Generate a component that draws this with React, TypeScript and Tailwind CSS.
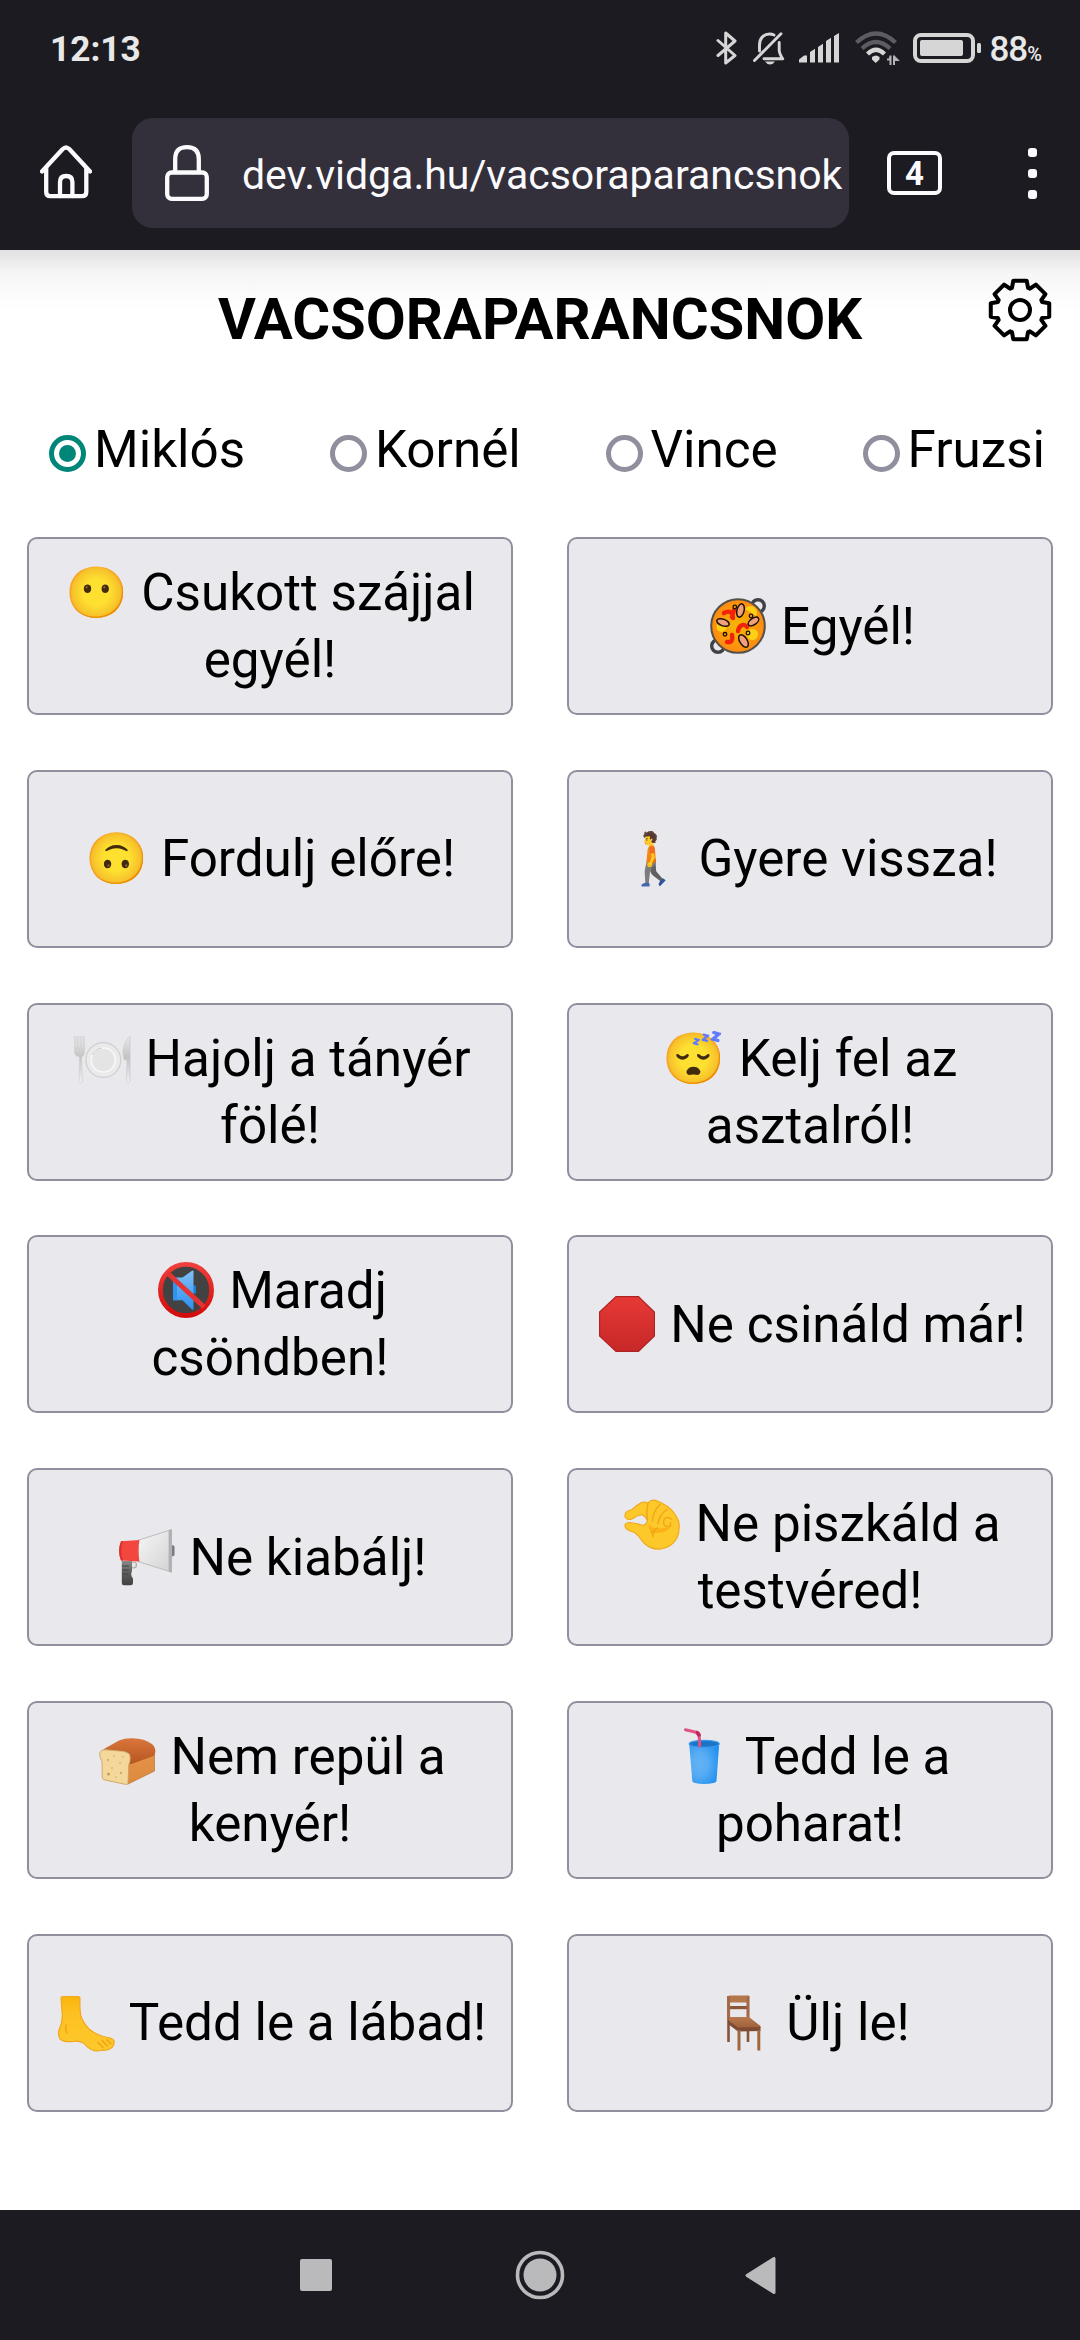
import React from 'react';

const people = ['Miklós', 'Kornél', 'Vince', 'Fruzsi'];

function Paella() {
  return (
    <>
      <defs>
        <radialGradient id="rice">
          <stop offset="0" stopColor="#f6b800" />
          <stop offset="0.55" stopColor="#fb9d0a" />
          <stop offset="1" stopColor="#fd8a12" />
        </radialGradient>
      </defs>
      <g fill="none" stroke="#3f4345" strokeWidth="3.4">
        <circle cx="48" cy="8" r="6.3" />
        <circle cx="8" cy="48" r="6.3" />
      </g>
      <circle cx="28" cy="28" r="26.8" fill="url(#rice)" stroke="#555048" strokeWidth="2" />
      <g fill="#fdd016">
        <path d="M35 11a6.5 6.5 0 0 1 11 7z" />
        <circle cx="11.5" cy="29" r="5" />
        <circle cx="42.5" cy="36.5" r="5.5" />
      </g>
      <g fill="none" stroke="#f3230b" strokeWidth="4.4" strokeLinecap="round">
        <path d="M14 15c5-3 9-1 9 5M24 12l-2 7" />
        <path d="M28 33c1-6 6-8 9-4" />
        <path d="M17 44c5 1 6-3 5-7" />
      </g>
      <g fill="#f2a07c" stroke="#1a1208" strokeWidth="1.5">
        <ellipse cx="30.5" cy="12.5" rx="3.6" ry="6.8" transform="rotate(14 30.5 12.5)" />
        <ellipse cx="13" cy="24.5" rx="6.5" ry="3.3" transform="rotate(20 13 24.5)" />
        <ellipse cx="43.5" cy="23.5" rx="6" ry="3.3" transform="rotate(-35 43.5 23.5)" />
        <ellipse cx="33.5" cy="43" rx="3.7" ry="7" transform="rotate(-32 33.5 43)" />
      </g>
      <g fill="none" stroke="#1a1208" strokeWidth="1.3">
        <circle cx="24.8" cy="9" r="1.8" />
        <circle cx="41" cy="18" r="1.8" />
        <circle cx="38" cy="35" r="1.8" />
        <circle cx="15" cy="36.3" r="1.8" />
      </g>
    </>
  );
}

function PlateSetting() {
  return (
    <>
      <defs>
        <linearGradient id="silver" x1="0" y1="0" x2="0" y2="1">
          <stop offset="0" stopColor="#e9e9e9" />
          <stop offset="0.45" stopColor="#c4c4c4" />
          <stop offset="1" stopColor="#f1f1f1" />
        </linearGradient>
      </defs>
      <circle cx="29.3" cy="30" r="17.4" fill="#eaeaea" stroke="#cfcfcf" strokeWidth="1.2" />
      <circle cx="29.3" cy="30" r="12" fill="#e4e4e4" stroke="#f8f8f8" strokeWidth="1.5" />
      <path d="M18.5 25a12 12 0 0 1 9-7" fill="none" stroke="#c8c8c8" strokeWidth="1" />
      <path d="M.6 6.5h1.5v11h1.4v-11h1.5v11h1.3v-11h1.5v11h1.2v-11h1.5v15c0 3-1 4.5-3 5.5l1 24.5q-1.7 2.300-3.500 0l.6-24.500C1.600 26 .6 24.500.6 21.500z" fill="url(#silver)" stroke="#c9c9c9" strokeWidth=".5" />
      <path d="M56 6.500v45q-1.800 2.300-3.600 0l.6-21.500h-2.600c-3.200-8 0-20 5.600-23.500z" fill="url(#silver)" stroke="#c4c4c4" strokeWidth=".6" />
    </>
  );
}

function MutedSpeaker() {
  return (
    <>
      <defs>
        <linearGradient id="ban" x1="0" y1="0" x2="0" y2="1">
          <stop offset="0" stopColor="#f0403c" />
          <stop offset="1" stopColor="#d30b0b" />
        </linearGradient>
        <linearGradient id="cone" x1="0" y1="0" x2="0" y2="1">
          <stop offset="0" stopColor="#82c0f7" />
          <stop offset="1" stopColor="#2b90f0" />
        </linearGradient>
      </defs>
      <circle cx="28" cy="28" r="25.6" fill="#424242" stroke="url(#ban)" strokeWidth="4.8" />
      <path d="M35 23.5h3v8h-3z" fill="#1c7cd6" />
      <path d="M15 15.5h9.500L34 8.800q1.500-.6 1.500.8v37.200q0 1.500-1.500.8L24.500 38.300H15z" fill="url(#cone)" />
      <path d="M15 15.500h4v22.800h-4z" fill="#2f93f2" />
      <path d="M10 11.500L46 45" stroke="#e53232" strokeWidth="5" />
    </>
  );
}

function StopSign() {
  return (
    <>
      <defs>
        <linearGradient id="stop" x1="0" y1="0" x2="0" y2="1">
          <stop offset="0" stopColor="#e73936" />
          <stop offset="1" stopColor="#c62828" />
        </linearGradient>
      </defs>
      <path d="M17 .6h22.500L55.400 16v24L39.500 55.400H17L.6 40V16z" fill="url(#stop)" stroke="#b02323" strokeWidth="1.2" />
    </>
  );
}

function Megaphone() {
  return (
    <>
      <defs>
        <linearGradient id="horn" x1="0" y1="0" x2="1" y2="1">
          <stop offset="0" stopColor="#f7f7f7" />
          <stop offset="1" stopColor="#d2d2d2" />
        </linearGradient>
        <linearGradient id="grip" x1="0" y1="0" x2="0" y2="1">
          <stop offset="0" stopColor="#8a8a8a" />
          <stop offset="0.5" stopColor="#5a5a5a" />
          <stop offset="1" stopColor="#424242" />
        </linearGradient>
      </defs>
      <circle cx="15.5" cy="36" r="3" fill="#e4e4e4" stroke="#a9a9a9" strokeWidth="1.2" />
      <path d="M3.800 32H14v10q-2 4 1 7.500V54q0 2.300-2.300 2.300H6q-2.200 0-2.200-2.300z" fill="url(#grip)" />
      <path d="M4 37h7M4 41h7M4 45h6" stroke="#444" strokeWidth="1" />
      <path d="M53 16.300h2q1.500 0 1.500 2v7q0 2-1.500 2h-2z" fill="#7b7b7b" />
      <path d="M20 11.300L53.500.6v42.500L20 32.500z" fill="url(#horn)" stroke="#bcbcbc" strokeWidth="1" />
      <path d="M50.600 1.300L53.800.2v43.300L50.600 42.500z" fill="#aeb2b4" />
      <path d="M3 12.300L21.500 11q-2 10 0 21.500L3 31.500Q-.8 22 3 12.300z" fill="#f2463f" />
      <path d="M3 12.300L5 12.100Q1.500 22 5 31.600l-2-.1Q-.8 22 3 12.300z" fill="#d9322e" />
    </>
  );
}

function Pinch() {
  return (
    <>
      <path
        d="M1.500 18.500Q2 16 8 14.500Q13 10 16.500 8Q20 6 24 8Q27 4 31.500 5.300Q38 7.500 43.500 11.500Q51 17 54.500 26Q56.500 34 53 43Q47 53 37 54Q27 55 20 48Q16.500 44 14 40.500Q11 37 6 36Q1 34 .9 30.500Q1 27.500 6 27.500Q14 28.500 19.500 30.500Q22.500 29.500 23.500 26Q22 22 18.500 19.500Q13 20.500 8 24Q3.500 25.500 1.300 22.500Q.6 20.500 1.500 18.500z"
        fill="#fdc829" stroke="#f0a91d" strokeWidth="1.2" strokeLinejoin="round"
      />
      <path d="M24 28Q27 34 38 33.500L46 31.500Q44 38 34 37.500Q29 40 25 34z" fill="#fbab10" opacity=".75" />
      <g fill="none" stroke="#f3a61a" strokeWidth="1.5" strokeLinecap="round">
        <path d="M24 8Q22 17 23.500 24" />
        <path d="M36 9.500Q28.500 17 28.500 26" />
        <path d="M43 14.500Q35 20 34 29" />
        <path d="M47.500 24Q40 20 39.500 27.500Q40.500 33 46.500 31V27.500" />
        <path d="M33.500 33Q29.500 35 29 39.500M27 36.500Q29 38.500 29 41.500" />
      </g>
    </>
  );
}

function Bread() {
  return (
    <>
      <defs>
        <linearGradient id="crust" x1="0" y1="0" x2="0" y2="1">
          <stop offset="0" stopColor="#d9763c" />
          <stop offset="1" stopColor="#b5561f" />
        </linearGradient>
        <linearGradient id="side" x1="0" y1="0" x2="0" y2="1">
          <stop offset="0" stopColor="#e3924a" />
          <stop offset="1" stopColor="#dc8a3d" />
        </linearGradient>
      </defs>
      <path d="M29 36L55.500 26v17L29 56z" fill="url(#side)" stroke="#c07a38" strokeWidth=".8" />
      <path d="M4 21.500L20 12.500q6-2.500 13-2.300 13 .3 20 5.800 4.500 4 3 9.500L54.500 28 31 36.500V27q-2-3.500-9-3.800L4 21.500z" fill="url(#crust)" />
      <path d="M.7 25.500Q1 21.500 7 21.800l15.500 1.400q8.500.8 8.700 6.300.2 4-1.500 7.500L29 56q-1.500.7-3 .3L6 52q-2.700-.8-2.700-2.500L3 33.500Q.5 29.500.7 25.500z" fill="#f3d79b" stroke="#cfa262" strokeWidth=".9" />
      <g fill="#c9a15f">
        <circle cx="9" cy="32" r="1" />
        <circle cx="15" cy="28" r=".8" />
        <circle cx="21" cy="35" r=".8" />
        <circle cx="9.5" cy="46" r="1.6" />
        <circle cx="13" cy="40" r=".8" />
        <circle cx="22" cy="45" r="1.1" />
        <circle cx="17" cy="49" r=".7" />
        <circle cx="24" cy="29" r=".7" />
      </g>
    </>
  );
}

function Cup() {
  return (
    <g transform="translate(1 0)">
      <defs>
        <radialGradient id="cup" cx="0.35" cy="0.5" r="0.7">
          <stop offset="0" stopColor="#63b2f5" />
          <stop offset="0.4" stopColor="#58acf3" />
          <stop offset="1" stopColor="#1f8ff0" />
        </radialGradient>
      </defs>
      <path d="M14.200 15.500h30L41.500 53q-.2 1.200-2 1.800-10.500 2.600-20.500 0-1.500-.5-1.700-1.800z" fill="url(#cup)" />
      <ellipse cx="29.2" cy="15.8" rx="15" ry="3.5" fill="#1b74c4" stroke="#3c9bef" strokeWidth="1.2" />
      <path d="M10.500 1.800L21 4.300q3 .8 3.200 4L24.700 18" fill="none" stroke="#e0527f" strokeWidth="3" strokeLinecap="round" />
      <path d="M21 4.300q3 .8 3.200 4" fill="none" stroke="#c8245c" strokeWidth="3.6" />
    </g>
  );
}

function Foot() {
  return (
    <>
      <defs>
        <linearGradient id="leg" x1="0" y1="0" x2="0" y2="1">
          <stop offset="0" stopColor="#fbb40e" />
          <stop offset="0.3" stopColor="#fdc022" />
          <stop offset="1" stopColor="#fdc92b" />
        </linearGradient>
      </defs>
      <path
        d="M3 4Q3 2.500 5 2.500H20Q22 2.500 22 4.500Q21.500 14 22.800 21.500Q25 29 31 35Q38 40.500 45 42.500Q54 43.500 56 46.500Q57 50 54 53.500Q50 57 44 56.200Q38 58 33 55.500Q28.500 53 25.500 49Q20 46.500 15 47.500Q6 48.500 2 45Q-.5 41 1 36Q4.500 29 4.300 21z"
        fill="url(#leg)" stroke="#f0a820" strokeWidth="1.200" strokeLinejoin="round"
      />
      <g fill="none" stroke="#ee9f17" strokeWidth="1.300" strokeLinecap="round">
        <path d="M8.500 31Q6.500 35 9 39" />
        <path d="M40 48.500L45 53.500M44 46.500L49.500 52M48.500 45.500L53 50" />
      </g>
    </>
  );
}

function Chair() {
  return (
    <>
      <defs>
        <linearGradient id="seat" x1="0" y1="0" x2="0" y2="1">
          <stop offset="0" stopColor="#b9794c" />
          <stop offset="1" stopColor="#9c5f3a" />
        </linearGradient>
      </defs>
      <path d="M13.500 2v46M33 2v46" stroke="#85523a" strokeWidth="2.6" />
      <path d="M14 1.500h20v7H14z" fill="#b5764b" />
      <path d="M14 12h20v3.200H14z" fill="#8d5639" />
      <path d="M12.500 2h2.600v22h-2.600zM31.700 2h2.600v22h-2.600z" fill="#a56a45" />
      <path d="M15 23h19l11.500 9v2L23 34.500 13 26z" fill="url(#seat)" />
      <path d="M13 26l10 7.500 22.500-.5v4L23 37.500 13 30z" fill="#7f4c33" />
      <path d="M24 36v20.500M43.800 36v20.500" stroke="#a0673f" strokeWidth="3" />
    </>
  );
}

type Command = { icon: string | (() => React.JSX.Element); text: string; rest?: string };

const commands: Command[] = [
  { icon: '😶', text: 'Csukott szájjal', rest: 'egyél!' },
  { icon: Paella, text: 'Egyél!' },
  { icon: '🙃', text: 'Fordulj előre!' },
  { icon: '🚶', text: 'Gyere vissza!' },
  { icon: PlateSetting, text: 'Hajolj a tányér', rest: 'fölé!' },
  { icon: '😴', text: 'Kelj fel az', rest: 'asztalról!' },
  { icon: MutedSpeaker, text: 'Maradj', rest: 'csöndben!' },
  { icon: StopSign, text: 'Ne csináld már!' },
  { icon: Megaphone, text: 'Ne kiabálj!' },
  { icon: Pinch, text: 'Ne piszkáld a', rest: 'testvéred!' },
  { icon: Bread, text: 'Nem repül a', rest: 'kenyér!' },
  { icon: Cup, text: 'Tedd le a', rest: 'poharat!' },
  { icon: Foot, text: 'Tedd le a lábad!' },
  { icon: Chair, text: 'Ülj le!' },
];

function Emoji({ icon: Icon }: { icon: Command['icon'] }) {
  if (typeof Icon === 'string') {
    return <span className="inline-block w-[63.4px] text-center text-[50.5px] leading-none">{Icon}</span>;
  }
  return (
    <svg viewBox="0 0 56 57" className="ml-[4.6px] mr-[2.8px] inline-block h-[57px] w-[56px] overflow-visible align-[-11px]">
      <Icon />
    </svg>
  );
}

function Gear() {
  const pts: string[] = [];
  for (let k = 0; k < 8; k++) {
    for (const [r, a] of [[23.5, -20], [30, -13], [30, 13], [23.5, 20]]) {
      const t = ((k * 45 + a - 90) * Math.PI) / 180;
      pts.push(`${(32 + r * Math.cos(t)).toFixed(2)},${(32 + r * Math.sin(t)).toFixed(2)}`);
    }
  }
  return (
    <svg viewBox="0 0 64 64" className="h-[64px] w-[64px]" fill="none" stroke="black" strokeWidth="4" strokeLinejoin="round">
      <polygon points={pts.join(' ')} />
      <circle cx="32" cy="32" r="10" />
    </svg>
  );
}

function StatusBar() {
  return (
    <div className="flex h-[96px] items-center pl-[50px] text-[#e8e8e8]">
      <span className="mt-[3px] text-[35.2px] font-bold leading-none">12:13</span>
      <div className="ml-auto flex items-center pr-[38px]">
        <svg viewBox="0 0 22 34" className="h-[34px] w-[22px]" fill="none" stroke="#d6d6d6" strokeWidth="3" strokeLinejoin="round" strokeLinecap="round">
          <path d="M2 9.500l17 15L9.700 32V2L19 10 2 24.500" />
        </svg>
        <svg viewBox="0 0 32 33" className="ml-[15px] h-[33px] w-[32px]" fill="none" stroke="#d6d6d6" strokeWidth="2.900" strokeLinecap="round" strokeLinejoin="round">
          <path d="M1.500 28.500L28 1.800" />
          <path d="M6.500 19V13C6.500 6 11 2 16.500 2q2.500 0 4.500 1M26.200 10.500V18q0 3.500 3.500 8.800H11" />
          <path d="M12 29.500h10q-2 3-5 3t-5-3z" fill="#d6d6d6" stroke="none" />
        </svg>
        <svg viewBox="0 0 40 30" className="ml-[14px] h-[30px] w-[40px]" fill="#d6d6d6">
          <path d="M0 29.500v-3l5-4h3v7zM11 29.500V19l5-3.200v13.700zM19 29.500V14l5-3.200v18.700zM27 29.500V8l5-3.300v24.800zM35 29.500V3l5-3v29.500z" />
        </svg>
        <svg viewBox="0 0 43 34" className="ml-[16px] h-[34px] w-[43px] overflow-visible" fill="none" strokeWidth="4.200">
          <path d="M1.500 11.500Q21 -6.500 40.500 11.500" stroke="#5d5c63" />
          <path d="M7 17.500Q21 4.500 35 17.500" stroke="#5d5c63" />
          <path d="M12.500 23Q21 14.500 29.500 23" stroke="#d6d6d6" />
          <path d="M17 26q4-3 7.500 0v2.500L20.700 32 17 28.500z" fill="#d6d6d6" />
          <path d="M35.500 24.500v9.500M32 28.500h2.500l1-3.500M39 24.500v9.500M39 25.500l3.500 3.500H39" stroke="#b4b4b6" strokeWidth="2" />
        </svg>
        <div className="ml-[15px] h-[30px] w-[62px] rounded-[8px] border-[4px] border-[#d6d6d6] p-[3px]">
          <div className="h-[16px] w-[43px] rounded-[2px] bg-[#d6d6d6]" />
        </div>
        <div className="ml-[2px] h-[10px] w-[4px] rounded-[1.5px] bg-[#d6d6d6]" />
        <span className="ml-[8px] mt-[2px] text-[35px] font-medium leading-none tracking-[-1px]">88</span>
        <span className="mt-[12px] text-[20px] font-medium leading-none">%</span>
      </div>
    </div>
  );
}

function Toolbar() {
  return (
    <div className="flex h-[154px] items-center pl-[40px] text-[#fbfbfe]">
      <svg viewBox="0 0 52 54" className="-mt-[3px] h-[54px] w-[52px]" fill="none" stroke="currentColor" strokeWidth="4.300" strokeLinecap="round" strokeLinejoin="round">
        <path d="M2 26.500L22.500 4.200q3.500-3.500 7 0L50 26.500" />
        <path d="M6.200 23v24q0 4.200 4.200 4.200h31.700q4.200 0 4.200-4.200V23" />
        <path d="M20 51V37q0-6 6.200-6t6.200 6v14" />
      </svg>
      <div className="ml-[40px] flex h-[110px] w-[717px] items-center overflow-hidden rounded-[21px] bg-[#33303c] pl-[33px]">
        <svg viewBox="0 0 44 56" className="h-[56px] w-[44px] shrink-0" fill="none" stroke="currentColor" strokeWidth="4.300">
          <rect x="2.2" y="27.500" width="39.600" height="26.300" rx="4.500" />
          <path d="M10.200 27V14.200q0-12 11.800-12t11.800 12V27" />
        </svg>
        <span className="ml-[33px] mt-[6px] whitespace-nowrap text-[41px]">dev.vidga.hu/vacsoraparancsnok</span>
      </div>
      <div className="ml-[38px] flex h-[44px] w-[55px] items-center justify-center rounded-[7px] border-[4px] border-current text-[33px] font-bold leading-none">4</div>
      <div className="ml-[86px] flex flex-col gap-[12px]">
        <i className="h-[9px] w-[9px] rounded-[3px] bg-current" />
        <i className="h-[9px] w-[9px] rounded-[3px] bg-current" />
        <i className="h-[9px] w-[9px] rounded-[3px] bg-current" />
      </div>
    </div>
  );
}

export default function App() {
  return (
    <div className="flex h-[2340px] w-[1080px] flex-col bg-[#1c1b22] font-['Roboto','Noto_Color_Emoji',sans-serif] text-black">
      <StatusBar />
      <Toolbar />
      <main className="relative h-[1960px] bg-white">
        <div className="absolute inset-x-0 top-0 h-[60px] bg-linear-to-b from-[#e1e1e1] via-[#f6f6f6] via-40% to-white" />
        <div className="relative h-[138px]">
          <h1 className="pt-[32px] text-center text-[58px] font-bold leading-[74px]">VACSORAPARANCSNOK</h1>
          <button className="absolute right-[28px] top-[28px]"><Gear /></button>
        </div>
        <div className="flex h-[149px] justify-between pl-[49px] pr-[35px]">
          {people.map((name, i) => (
            <label key={name} className="flex h-[125px] items-center text-[51.2px]">
              <span className={i === 0 ? 'mt-[6px] flex h-[37px] w-[37px] items-center justify-center rounded-full border-[5px] border-[#008678]' : 'mt-[6px] h-[37px] w-[37px] rounded-full border-[5px] border-[#8f8f9d]'}>
                {i === 0 && <span className="h-[17px] w-[17px] rounded-full bg-[#008678]" />}
              </span>
              <span className="ml-[8px]">{name}</span>
            </label>
          ))}
        </div>
        <div className="grid grid-cols-2 gap-x-[54px] gap-y-[54.83px] px-[27px]">
          {commands.map(({ icon, text, rest }) => (
            <button key={text} className="h-[178px] whitespace-nowrap rounded-[10px] border-2 border-[#8f8f9d] bg-[#e9e9ed]">
              <span className="block h-[67px] text-[51.2px] leading-[67px]"><Emoji icon={icon} /> {text}</span>
              {rest && <span className="block h-[67px] text-[51.2px] leading-[67px]">{rest}</span>}
            </button>
          ))}
        </div>
      </main>
      <nav className="flex h-[130px] items-center pl-[300px]">
        <div className="h-[32px] w-[32px] rounded-[2px] bg-[#bababc]" />
        <svg viewBox="0 0 50 50" className="ml-[183px] h-[50px] w-[50px]">
          <circle cx="25" cy="25" r="22.500" fill="none" stroke="#bababc" strokeWidth="3.600" />
          <circle cx="25" cy="25" r="16.500" fill="#bababc" />
        </svg>
        <svg viewBox="0 0 31 37" className="ml-[180px] h-[37px] w-[31px]">
          <path d="M29 1.500v34L2 18.500z" fill="#bababc" stroke="#bababc" strokeWidth="3" strokeLinejoin="round" />
        </svg>
      </nav>
    </div>
  );
}
